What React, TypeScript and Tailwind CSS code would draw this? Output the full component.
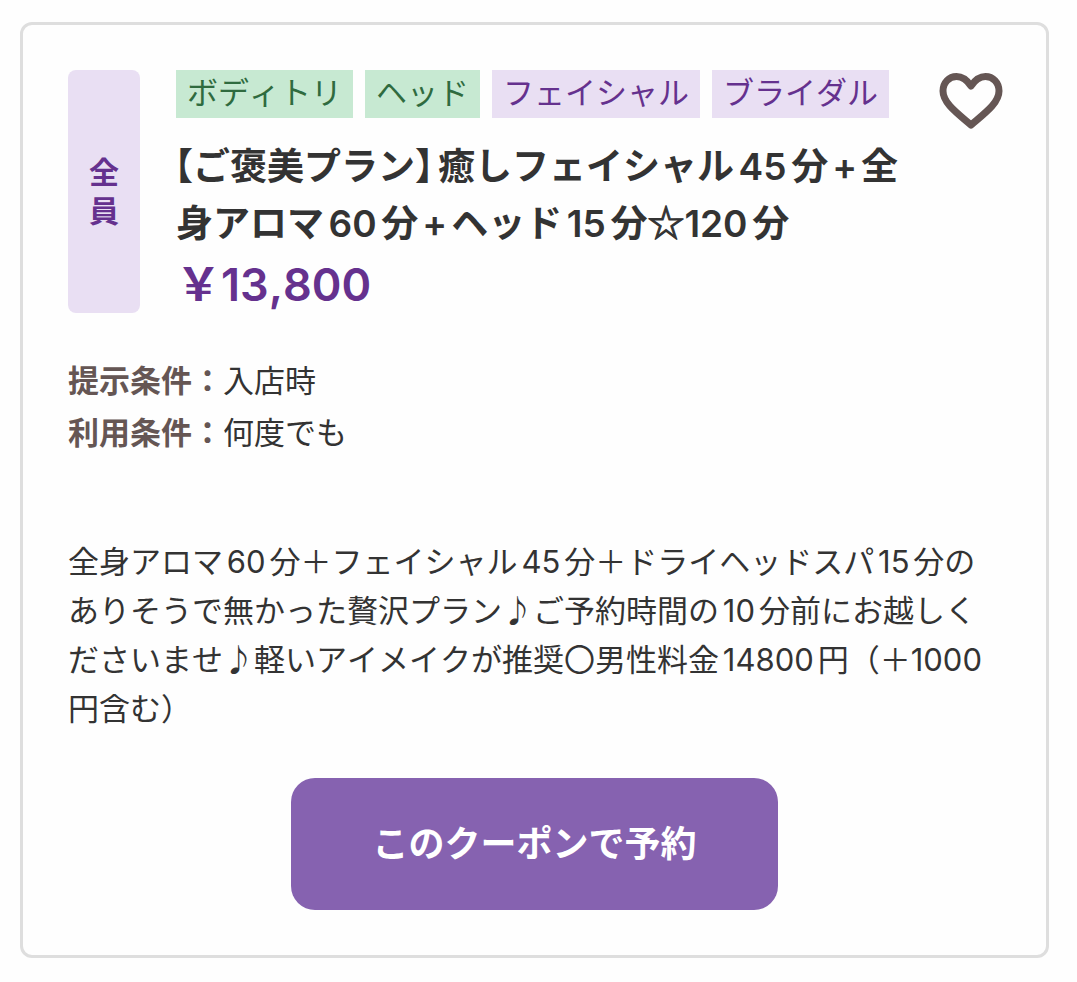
import React, { useState } from "react";

interface TagType {
    label: string;
    tone: string;
}

const tags: TagType[] = [
    { label: "ボディトリ", tone: "bg-[#c7e9d2] text-[#2f6b3f]" },
    { label: "ヘッド", tone: "bg-[#c7e9d2] text-[#2f6b3f]" },
    { label: "フェイシャル", tone: "bg-[#e9dff3] text-[#65318e]" },
    { label: "ブライダル", tone: "bg-[#e9dff3] text-[#65318e]" },
]

const App = () => {
    const [ liked, setLiked ] = useState<boolean>(false)

    return (
        <main lang="ja" className="min-h-screen bg-[#fefefe] px-5 pt-[22px] pr-7 pb-6 font-['Inter','Noto_Sans_CJK_JP',sans-serif] text-[#333] [font-kerning:none] [text-autospace:normal]">
            <article className="rounded-xl border-3 border-[#dedede] p-[45px]">
                <div className="flex">
                    <div className="flex w-[72px] shrink-0 flex-col items-center justify-center rounded-lg bg-[#e9dff3] text-[30px] leading-[39px] font-semibold text-[#65318e]">
                        <span>全</span>
                        <span>員</span>
                    </div>
                    <div className="ml-9 min-w-0 flex-1">
                        <ul className="flex gap-3">
                            {
                                tags.map((tag) => (
                                    <li key={tag.label} className={`h-12 px-[11px] text-[31px] leading-[46px] whitespace-nowrap ${tag.tone}`}>{tag.label}</li>
                                ))
                            }
                        </ul>
                        <h1 className="mt-5 text-[37px] leading-[57px] font-semibold">
                            <span className="-mr-3.5 -ml-5">【ご褒美プラン】</span>癒しフェイシャル45分<span className="mx-1">+</span>全<br />
                            身アロマ60分<span className="mx-1">+</span>ヘッド15分<span className="font-['Noto_Sans_CJK_JP',sans-serif] leading-none [-webkit-text-stroke:1px]">☆</span>120分
                        </h1>
                        <p className="pt-1 text-[45px] leading-[57px] font-semibold text-[#65318e]">￥13,800</p>
                    </div>
                    <button type="button" aria-label="お気に入り" aria-pressed={liked} onClick={() => setLiked(!liked)} className="-mr-0.5 h-16 w-16 shrink-0">
                        <svg viewBox="0 0 64 64" fill={liked ? "#65318e" : "none"} stroke="#655654" strokeWidth="7" strokeLinejoin="round">
                            <path d="M32 55 C18 43 4 33 4 21 C4 12.5 10 6.5 17.5 6.5 C24 6.5 28 10 32 16 C36 10 40 6.5 46.5 6.5 C54 6.5 60 12.5 60 21 C60 33 46 43 32 55 Z" />
                        </svg>
                    </button>
                </div>
                <dl className="mt-[42px] text-[31px] leading-[52px]">
                    <div className="flex">
                        <dt className="font-semibold text-[#655654]">提示条件：</dt>
                        <dd>入店時</dd>
                    </div>
                    <div className="flex">
                        <dt className="font-semibold text-[#655654]">利用条件：</dt>
                        <dd>何度でも</dd>
                    </div>
                </dl>
                <p className="mt-[78px] text-[31px] leading-[49px]">
                    全身アロマ60分＋フェイシャル45分＋ドライヘッドスパ15分の<br />
                    ありそうで無かった贅沢プラン♪ご予約時間の10分前にお越しく<br />
                    ださいませ♪軽いアイメイクが推奨〇男性料金14800円（＋1000<br />
                    円含む）
                </p>
                <button type="button" className="mx-auto mt-[45px] block h-[132px] w-[487px] rounded-3xl bg-[#8662b0] text-[36px] font-semibold text-white">
                    このクーポンで予約
                </button>
            </article>
        </main>
    )
}

export default App
